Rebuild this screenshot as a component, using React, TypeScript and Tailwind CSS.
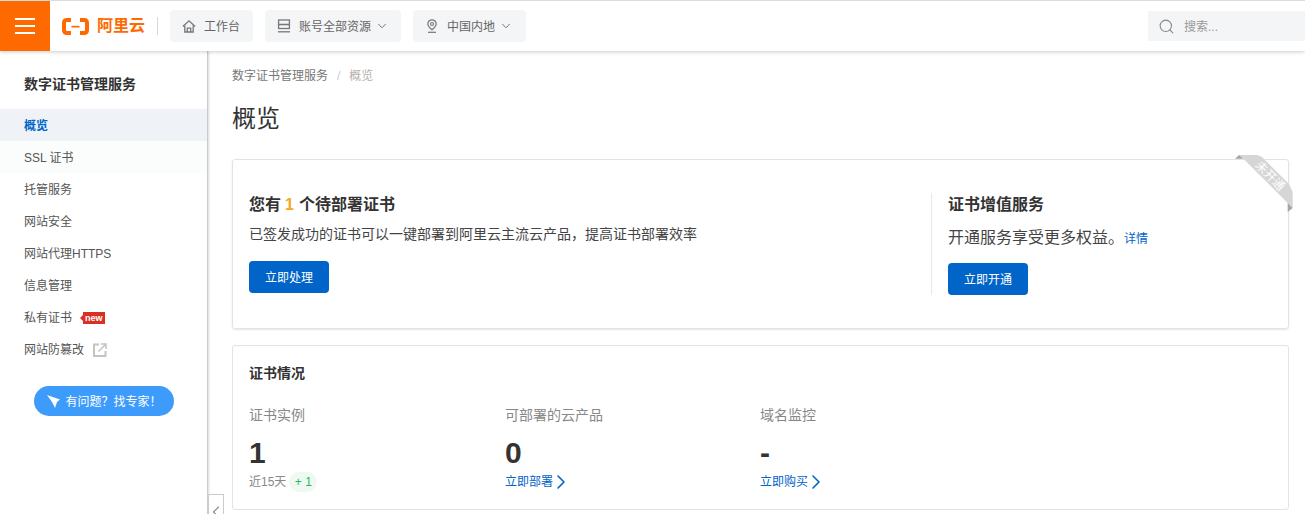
import { ChevronDown, ChevronLeft, ChevronRight, Search } from "lucide-react";

const menu = ["SSL 证书", "托管服务", "网站安全", "网站代理HTTPS", "信息管理"];

function Logo() {
  return (
    <svg width="27" height="17" viewBox="0 0 27 17" fill="none" className="shrink-0">
      <path d="M9 2H5C3 2 2 3 2 5v7c0 2 1 3 3 3h4" stroke="#ff6a00" strokeWidth="4" />
      <path d="M18 2h4c2 0 3 1 3 3v7c0 2-1 3-3 3h-4" stroke="#ff6a00" strokeWidth="4" />
      <rect x="9.500" y="7.800" width="8" height="1.700" fill="#ff6a00" />
    </svg>
  );
}

function HomeIcon() {
  return (
    <svg width="14" height="14" viewBox="0 0 14 14" fill="none" stroke="#777" strokeWidth="1.300">
      <path d="M.8 7.500L7 1.800l6.200 5.700" />
      <path d="M2.800 6.500v6.500h8.400V6.500" />
      <path d="M5.300 13V9.200h3.400V13" />
    </svg>
  );
}

function ResourceIcon() {
  return (
    <svg width="14" height="14" viewBox="0 0 14 14" fill="none" stroke="#777" strokeWidth="1.300">
      <rect x="1.600" y="1" width="10.800" height="4.500" />
      <rect x="1.600" y="5.500" width="10.800" height="4" />
      <path d="M1 12.800h12" />
    </svg>
  );
}

function PinIcon() {
  return (
    <svg width="14" height="14" viewBox="0 0 14 14" fill="none" stroke="#777" strokeWidth="1.200">
      <path d="M7 10.800C4.800 8.900 2.800 7.200 2.800 5a4.200 4.200 0 0 1 8.400 0c0 2.200-2 3.900-4.200 5.800z" />
      <circle cx="7" cy="5" r="1.500" />
      <path d="M3 13.300h8" />
    </svg>
  );
}

function TopButton({ icon, label, caret, width }: { icon: React.ReactNode; label: string; caret?: boolean; width: string }) {
  return (
    <div className={`flex h-8 items-center rounded-sm bg-[#f4f5f7] pl-3 text-xs text-[#666] ${width}`}>
      {icon}
      <span className="ml-2 whitespace-nowrap pt-[2px]">{label}</span>
      {caret && <ChevronDown size={14} strokeWidth={1.500} className="ml-1 text-[#666]" />}
    </div>
  );
}

function Header() {
  return (
    <header className="relative z-10 flex h-[51px] shrink-0 items-center border-t border-[#dcdcdc] bg-white shadow-[0_1px_4px_rgba(0,0,0,0.2)]">
      <div className="flex h-[50px] w-[50px] shrink-0 flex-col items-center justify-center gap-[5px] bg-[#ff6a00]">
        <span className="h-0.5 w-5 bg-white" />
        <span className="h-0.5 w-5 bg-white" />
        <span className="h-0.5 w-5 bg-white" />
      </div>
      <div className="ml-3 flex items-center gap-2">
        <Logo />
        <span className="text-[16px] font-bold leading-none text-[#ff6a00]">阿里云</span>
      </div>
      <div className="ml-3 h-[18px] w-px bg-[#d8d8d8]" />
      <div className="ml-3 flex items-center gap-3">
        <TopButton width="w-[83px]" label="工作台" icon={<HomeIcon />} />
        <TopButton width="w-[136px]" label="账号全部资源" caret icon={<ResourceIcon />} />
        <TopButton width="w-[113px]" label="中国内地" caret icon={<PinIcon />} />
      </div>
      <div className="ml-auto flex h-[30px] w-[157px] items-center bg-[#f4f5f7] pl-2.5 text-xs text-[#999]">
        <Search size={17} strokeWidth={1.500} className="text-[#888]" />
        <span className="ml-[9px] pt-[2px]">搜索...</span>
      </div>
    </header>
  );
}

function Sidebar() {
  return (
    <aside className="relative flex w-[208px] shrink-0 flex-col border-r border-[#c8ccd0] bg-white shadow-[1px_0_2px_rgba(0,0,0,0.15)]">
      <div className="flex h-[58px] items-end pb-[15px] pl-6 text-sm font-bold text-[#333]">数字证书管理服务</div>
      <div className="flex h-8 items-center bg-[#eff3f8] pl-6 pt-[2px] text-xs font-bold text-[#0064c8]">概览</div>
      {menu.map((m, i) => (
        <div key={m} className={`flex h-8 items-center pl-6 pt-[2px] text-xs text-[#555] ${i === 0 ? "bg-[#fbfdfc]" : ""}`}>
          {m}
        </div>
      ))}
      <div className="flex h-8 items-center pl-6 pt-[2px] text-xs text-[#555]">
        私有证书
        <span className="ml-[8px] h-0 w-0 border-y-[3px] border-r-[3px] border-y-transparent border-r-[#d93026]" />
        <span className="flex h-[12px] items-center bg-[#d93026] px-[2px] text-[9px] font-bold leading-none text-white">new</span>
      </div>
      <div className="flex h-8 items-center pl-6 pt-[2px] text-xs text-[#555]">
        网站防篡改
        <svg width="14" height="14" viewBox="0 0 14 14" fill="none" className="ml-[9px]">
          <path d="M6 1.500H1v11.500h11.500V8" stroke="#c4c4c4" strokeWidth="2" />
          <path d="M5.500 8.500L12 2M8 1h5v5" stroke="#c4c4c4" strokeWidth="1.500" />
        </svg>
      </div>
      <div className="ml-[34px] mt-[21px] flex h-[30px] w-[140px] items-center justify-center gap-[5px] rounded-full bg-[#3d9bfb] text-xs text-white">
        <svg width="14" height="14" viewBox="0 0 14 14" fill="white">
          <path d="M1 1l13 4.500-3 2.500-2 6-3-6z" />
        </svg>
        <span className="pt-[2px]">有问题？找专家！</span>
      </div>
      <div className="absolute -right-[17px] bottom-0 flex h-[20px] w-[16px] items-start justify-center overflow-hidden border border-b-0 border-[#c8ccd0] bg-white pt-[7px]">
        <ChevronLeft size={20} strokeWidth={1.300} className="shrink-0 text-[#888]" />
      </div>
    </aside>
  );
}

function Ribbon() {
  return (
    <div className="absolute -right-[6px] -top-[7px] h-[62px] w-[60px]">
      <svg width="60" height="62" viewBox="0 0 60 62" className="absolute left-0 top-0">
        <path d="M5 2H23L28 4L55 31L58.700 39V55L53.700 50L9.300 5.700Z" fill="#d6d6d6" />
        <path d="M1 5.700L5 2L9.300 5.700Z" fill="#a6a6a6" />
        <path d="M53.700 50L58.700 55L53.700 59Z" fill="#a6a6a6" />
      </svg>
      <span className="absolute left-[36px] top-[23px] -translate-x-1/2 -translate-y-1/2 rotate-45 whitespace-nowrap text-xs leading-none text-white">未开通</span>
    </div>
  );
}

function Stat({ label, value, children, width }: { label: string; value: string; children: React.ReactNode; width: string }) {
  return (
    <div className={width}>
      <div className="text-sm leading-[18px] text-[#888]">{label}</div>
      <div className="mt-[9px] text-[30px] font-bold leading-[40px] text-[#333]">{value}</div>
      <div className="-mt-[3px] flex h-[24px] items-center">{children}</div>
    </div>
  );
}

function BuyLink({ label }: { label: string }) {
  return (
    <span className="flex items-center text-xs text-[#0064c8]">
      {label}
      <ChevronRight size={24} strokeWidth={1.600} className="-ml-[4px]" />
    </span>
  );
}

export default function App() {
  return (
    <div
      className="flex h-[514px] w-[1305px] flex-col overflow-hidden bg-white"
      style={{ fontFamily: '"Liberation Sans", "Noto Sans CJK SC", sans-serif' }}
    >
      <Header />
      <div className="flex min-h-0 flex-1">
        <Sidebar />
        <main className="flex-1 pl-6 pr-4">
          <div className="mt-[17px] flex h-[16px] items-center text-xs text-[#777]">
            数字证书管理服务
            <span className="mx-[9px] text-[#ccc]">/</span>
            <span className="text-[#b5b0ae]">概览</span>
          </div>
          <h1 className="mt-[17px] text-2xl font-normal leading-[36px] text-[#333]">概览</h1>
          <section className="relative mt-[22px] flex h-[170px] rounded-[3px] border border-[#e3e3e3] shadow-[0_1px_2px_rgba(0,0,0,0.1)]">
            <Ribbon />
            <div className="w-[698px] pl-4 pt-[34px]">
              <div className="text-base font-bold leading-[22px] text-[#333]">
                您有<span className="ml-[4px] mr-[5px] text-[#f5a623]">1</span>个待部署证书
              </div>
              <p className="mt-[8px] text-sm leading-[20px] text-[#444]">已签发成功的证书可以一键部署到阿里云主流云产品，提高证书部署效率</p>
              <div className="mt-[17px] flex h-8 w-20 items-center justify-center rounded-sm bg-[#0064c8] pt-[2px] text-xs text-white">立即处理</div>
            </div>
            <div className="mt-[33px] h-[102px] border-l border-[#e8e8e8] pl-4 pt-px">
              <div className="text-base font-bold leading-[22px] text-[#333]">证书增值服务</div>
              <p className="mt-[11px] flex items-end text-base leading-[22px] text-[#444]">
                开通服务享受更多权益。
                <span className="text-xs leading-[20px] text-[#0064c8]">详情</span>
              </p>
              <div className="mt-[14px] flex h-8 w-20 items-center justify-center rounded-sm bg-[#0064c8] pt-[2px] text-xs text-white">立即开通</div>
            </div>
          </section>
          <section className="mt-4 h-[165px] rounded-[3px] border border-[#e3e3e3] pl-4 pt-[18px]">
            <div className="text-sm font-bold leading-[18px] text-[#333]">证书情况</div>
            <div className="mt-[24px] flex">
              <Stat width="w-[256px]" label="证书实例" value="1">
                <span className="text-xs text-[#888]">近15天</span>
                <span className="ml-[3px] flex h-[20px] w-[28px] items-center justify-center rounded-full bg-[#eef9f2] text-xs text-[#2fb36a]">+ 1</span>
              </Stat>
              <Stat width="w-[255px]" label="可部署的云产品" value="0">
                <BuyLink label="立即部署" />
              </Stat>
              <Stat width="w-[200px]" label="域名监控" value="-">
                <BuyLink label="立即购买" />
              </Stat>
            </div>
          </section>
        </main>
      </div>
    </div>
  );
}
